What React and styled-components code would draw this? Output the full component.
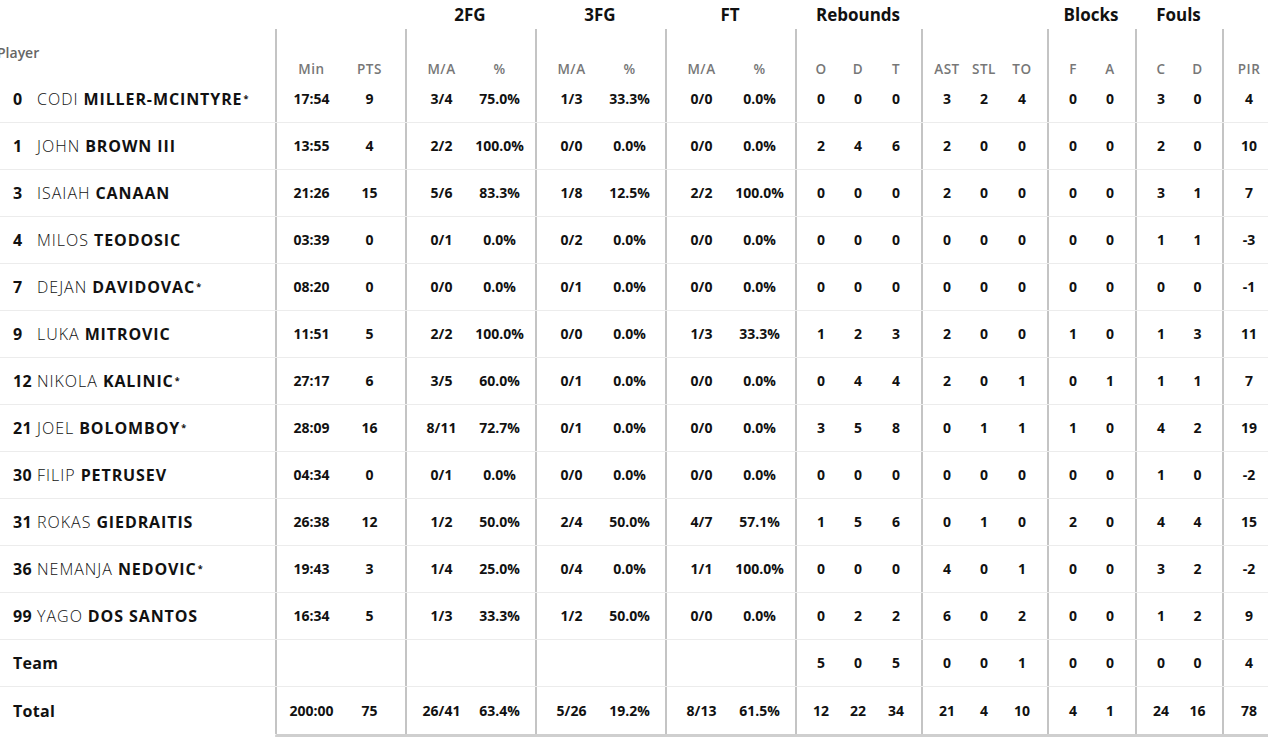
import React from "react";
import styled, { createGlobalStyle } from "styled-components";

const GlobalStyle = createGlobalStyle`
  * { box-sizing: border-box; }
  body {
    margin: 0;
    background: #fff;
    overflow: hidden;
    font-family: "Open Sans", "Liberation Sans", sans-serif;
    color: #111;
  }
`;

const cols = [
  { key: "min", label: "Min", w: 65, start: true },
  { key: "pts", label: "PTS", w: 65, end: true },
  { key: "fg2", label: "M/A", w: 65, start: true },
  { key: "fg2p", label: "%", w: 65, end: true },
  { key: "fg3", label: "M/A", w: 65, start: true },
  { key: "fg3p", label: "%", w: 65, end: true },
  { key: "ft", label: "M/A", w: 65, start: true },
  { key: "ftp", label: "%", w: 65, end: true },
  { key: "o", label: "O", w: 44, start: true },
  { key: "d", label: "D", w: 38 },
  { key: "t", label: "T", w: 44, end: true },
  { key: "ast", label: "AST", w: 44, start: true },
  { key: "stl", label: "STL", w: 38 },
  { key: "to", label: "TO", w: 44, end: true },
  { key: "bf", label: "F", w: 44, start: true },
  { key: "ba", label: "A", w: 44, end: true },
  { key: "fc", label: "C", w: 44, start: true },
  { key: "fd", label: "D", w: 43, end: true },
  { key: "pir", label: "PIR", w: 52, start: true, end: true },
];

const groups = [
  { title: "", span: 2 },
  { title: "2FG", span: 2 },
  { title: "3FG", span: 2 },
  { title: "FT", span: 2 },
  { title: "Rebounds", span: 3 },
  { title: "", span: 3 },
  { title: "Blocks", span: 2 },
  { title: "Fouls", span: 2 },
  { title: "", span: 1 },
];

const template = cols.map((c) => `${c.w}px`).join(" ");

const players = [
  ["0", "CODI", "MILLER-MCINTYRE", true, "17:54 9 3/4 75.0% 1/3 33.3% 0/0 0.0% 0 0 0 3 2 4 0 0 3 0 4"],
  ["1", "JOHN", "BROWN III", false, "13:55 4 2/2 100.0% 0/0 0.0% 0/0 0.0% 2 4 6 2 0 0 0 0 2 0 10"],
  ["3", "ISAIAH", "CANAAN", false, "21:26 15 5/6 83.3% 1/8 12.5% 2/2 100.0% 0 0 0 2 0 0 0 0 3 1 7"],
  ["4", "MILOS", "TEODOSIC", false, "03:39 0 0/1 0.0% 0/2 0.0% 0/0 0.0% 0 0 0 0 0 0 0 0 1 1 -3"],
  ["7", "DEJAN", "DAVIDOVAC", true, "08:20 0 0/0 0.0% 0/1 0.0% 0/0 0.0% 0 0 0 0 0 0 0 0 0 0 -1"],
  ["9", "LUKA", "MITROVIC", false, "11:51 5 2/2 100.0% 0/0 0.0% 1/3 33.3% 1 2 3 2 0 0 1 0 1 3 11"],
  ["12", "NIKOLA", "KALINIC", true, "27:17 6 3/5 60.0% 0/1 0.0% 0/0 0.0% 0 4 4 2 0 1 0 1 1 1 7"],
  ["21", "JOEL", "BOLOMBOY", true, "28:09 16 8/11 72.7% 0/1 0.0% 0/0 0.0% 3 5 8 0 1 1 1 0 4 2 19"],
  ["30", "FILIP", "PETRUSEV", false, "04:34 0 0/1 0.0% 0/0 0.0% 0/0 0.0% 0 0 0 0 0 0 0 0 1 0 -2"],
  ["31", "ROKAS", "GIEDRAITIS", false, "26:38 12 1/2 50.0% 2/4 50.0% 4/7 57.1% 1 5 6 0 1 0 2 0 4 4 15"],
  ["36", "NEMANJA", "NEDOVIC", true, "19:43 3 1/4 25.0% 0/4 0.0% 1/1 100.0% 0 0 0 4 0 1 0 0 3 2 -2"],
  ["99", "YAGO", "DOS SANTOS", false, "16:34 5 1/3 33.3% 1/2 50.0% 0/0 0.0% 0 2 2 6 0 2 0 0 1 2 9"],
];

const teamRow = "- - - - - - - - 5 0 5 0 0 1 0 0 0 0 4";
const totalRow = "200:00 75 26/41 63.4% 5/26 19.2% 8/13 61.5% 12 22 34 21 4 10 4 1 24 16 78";

const split = (s) => s.split(" ").map((v) => (v === "-" ? "" : v));

const Page = styled.div`
  display: flex;
  align-items: flex-start;
  margin-left: -4px;
  width: max-content;
`;

const PlayerColumn = styled.div`
  width: 279px;
  display: flex;
  flex-direction: column;
`;

const Spacer = styled.div`
  height: 29px;
`;

const PlayerHead = styled.div`
  height: 47px;
  display: flex;
  align-items: center;
  padding-left: 1px;
  font-size: 14px;
  font-weight: 600;
  color: #666;
`;

const PlayerCell = styled.div`
  height: 47px;
  display: flex;
  align-items: center;
  padding-left: 17px;
  font-size: 16px;
  white-space: nowrap;
  border-bottom: ${(p) => (p.$last ? "none" : "1px solid #ececec")};
`;

const Num = styled.span`
  font-weight: 700;
  min-width: 20px;
  margin-right: 4px;
  letter-spacing: 0.3px;
`;

const First = styled.span`
  font-weight: 300;
  color: #111;
  letter-spacing: 1px;
  margin-right: 5px;
`;

const Last = styled.span`
  font-weight: 700;
  letter-spacing: 0.9px;
`;

const Star = styled.sup`
  font-size: 9px;
  font-weight: 700;
  vertical-align: 6px;
  line-height: 0;
  margin-left: 1px;
`;

const TeamLabel = styled.span`
  font-weight: 700;
  letter-spacing: 0.3px;
`;

const StatsPanel = styled.div`
  display: flex;
  flex-direction: column;
`;

const GroupRow = styled.div`
  display: grid;
  grid-template-columns: ${template};
  height: 29px;
`;

const GroupTitle = styled.div`
  grid-column: span ${(p) => p.$span};
  display: flex;
  align-items: center;
  justify-content: center;
  font-size: 17px;
  font-weight: 700;
  color: #111;
`;

const Row = styled.div`
  display: grid;
  grid-template-columns: ${template};
  height: 47px;
  border-bottom: ${(p) => (p.$line ? "1px solid #ececec" : "none")};
`;

const Cell = styled.div`
  display: flex;
  justify-content: center;
  align-items: ${(p) => (p.$head ? "flex-end" : "center")};
  padding-left: ${(p) => (p.$start ? "6px" : "0")};
  padding-right: ${(p) => (p.$end ? "6px" : "0")};
  border-left: ${(p) => (p.$start ? "2px solid #c4c4c4" : "none")};
  font-size: ${(p) => (p.$head ? "13.5px" : "14px")};
  font-weight: ${(p) => (p.$head ? 600 : 700)};
  color: ${(p) => (p.$head ? "#777" : "#111")};
  letter-spacing: ${(p) => (p.$head ? "0.5px" : "0")};
  line-height: ${(p) => (p.$head ? "13px" : "16px")};
  white-space: nowrap;
`;

const Scrollbar = styled.div`
  height: 4px;
  background: #cfcfcf;
  border-radius: 2px;
`;

const StatRow = ({ values, head, line }) => (
  <Row $line={line}>
    {cols.map((c, i) => (
      <Cell key={c.key} $start={c.start} $end={c.end} $head={head}>
        {head ? c.label : values[i]}
      </Cell>
    ))}
  </Row>
);

export default function App() {
  return (
    <>
      <GlobalStyle />
      <Page>
        <PlayerColumn>
          <Spacer />
          <PlayerHead>Player</PlayerHead>
          {players.map(([num, first, last, starter]) => (
            <PlayerCell key={num}>
              <Num>{num}</Num>
              <First>{first}</First>
              <Last>{last}</Last>
              {starter && <Star>*</Star>}
            </PlayerCell>
          ))}
          <PlayerCell>
            <TeamLabel>Team</TeamLabel>
          </PlayerCell>
          <PlayerCell $last>
            <TeamLabel>Total</TeamLabel>
          </PlayerCell>
        </PlayerColumn>
        <StatsPanel>
          <GroupRow>
            {groups.map((g, i) => (
              <GroupTitle key={i} $span={g.span}>
                {g.title}
              </GroupTitle>
            ))}
          </GroupRow>
          <StatRow head />
          {players.map((p) => (
            <StatRow key={p[0]} values={split(p[4])} line />
          ))}
          <StatRow values={split(teamRow)} line />
          <StatRow values={split(totalRow)} />
          <Scrollbar />
        </StatsPanel>
      </Page>
    </>
  );
}
